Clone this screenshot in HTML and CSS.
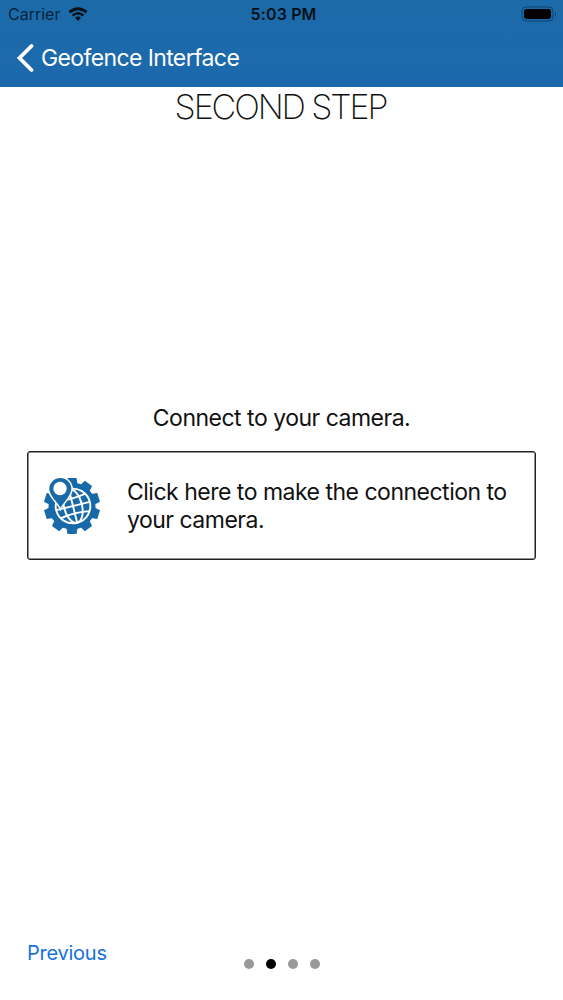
FILE: index.html
```
<!DOCTYPE html>
<html lang="en">
<head>
<meta charset="utf-8">
<title>Geofence Interface</title>
<link rel="stylesheet" href="styles.css">
</head>
<body>
<div class="screen">
  <header class="header">
    <div class="status">
      <div class="carrier"><span class="carrier-name">Carrier</span>
        <svg class="wifi" viewBox="0 0 20 14"><path d="M1.4 5.2Q10-1.8 18.6 5.2" fill="none" stroke="#071018" stroke-width="3"/><path d="M4.6 8.5Q10 4 15.4 8.5" fill="none" stroke="#071018" stroke-width="2.6"/><path d="M7 10.7Q10 8.4 13 10.7L10 14Z" fill="#071018"/></svg>
      </div>
      <div class="time">5:03 PM</div>
      <svg class="battery" viewBox="0 0 36 16"><rect x="1" y="1" width="31" height="14" rx="4" fill="none" stroke="#0d426c"/><rect x="3" y="3" width="27" height="10" rx="2.4" fill="#000"/><path d="M34 5.5q2 2.5 0 5z" fill="#0d426c"/></svg>
    </div>
    <nav class="nav">
      <svg class="back" viewBox="0 0 18 30"><path d="M15.5 3L3.5 15L15.5 27" fill="none" stroke="#fff" stroke-width="3.8" stroke-linecap="round" stroke-linejoin="miter"/></svg>
      <span class="nav-title">Geofence Interface</span>
    </nav>
  </header>
  <main class="main">
    <h1 class="title">SECOND STEP</h1>
    <p class="prompt">Connect to your camera.</p>
    <button class="card">
      <svg class="gear" viewBox="-30 -30 60 60">
        <g fill="#1869a8">
          <circle r="23.5"/>
          <path id="tooth" d="M-5.5-22L-4.5-28H4.5L5.5-22Z"/>
          <use href="#tooth" transform="rotate(36)"/><use href="#tooth" transform="rotate(72)"/><use href="#tooth" transform="rotate(108)"/><use href="#tooth" transform="rotate(144)"/><use href="#tooth" transform="rotate(180)"/><use href="#tooth" transform="rotate(216)"/><use href="#tooth" transform="rotate(252)"/><use href="#tooth" transform="rotate(288)"/><use href="#tooth" transform="rotate(324)"/>
        </g>
        <g fill="none" stroke="#fff" stroke-width="1.9" transform="translate(1 0) rotate(-14)"><circle r="17.3"/><ellipse rx="9" ry="17.3"/><path d="M0-17.3V17.3M-17.3 0H17.3M-15-9Q0-6 15-9M-15 9Q0 6 15 9"/></g>
        <path d="M-11.5 3.5C-14-3-23.5-9-23.5-17A11.8 11.8 0 0 1 .1-17C.1-9-9-3-11.5 3.5Z" fill="#1869a8" stroke="#fff" stroke-width="1.5"/><circle cx="-12" cy="-17.5" r="6.7" fill="#fff"/>
      </svg>
      <span class="card-text"><span class="line">Click here to make the connection to</span><span class="line">your camera.</span></span>
    </button>
  </main>
  <footer class="footer">
    <a class="previous">Previous</a>
    <div class="dots"><i class="dot"></i><i class="dot active"></i><i class="dot"></i><i class="dot"></i></div>
  </footer>
</div>
</body>
</html>
```
FILE: styles.css
```
* { box-sizing: border-box; }
body { margin: 0; background: #fff; color: #111; font-family: Inter, "Liberation Sans", sans-serif; }
.screen { height: 1000px; display: flex; flex-direction: column; overflow: hidden; }
.header { height: 87px; background: linear-gradient(#1c6ba8, #1c68ad); flex: none; }
.status { height: 28px; display: grid; grid-template-columns: 1fr auto 1fr; align-items: center; padding: 0 6px 0 8px; }
.carrier { display: flex; align-items: center; gap: 8px; font-size: 16px; color: #09243a; }
.wifi { width: 20px; height: 14px; margin-top: -1px; }
.time { font-size: 16px; font-weight: 600; letter-spacing: .15px; margin-left: 2px; color: #071018; }
.battery { width: 36px; height: 16px; justify-self: end; margin-top: -1px; }
.nav { height: 59px; display: flex; align-items: center; padding-left: 16px; gap: 7px; color: #fff; }
.back { width: 18px; height: 30px; }
.nav-title { font-size: 23px; letter-spacing: -.62px; }
.main { flex: 1; padding: 0 27px; }
.title { margin: 0; padding-right: 2px; height: 40px; line-height: 40px; text-align: center; font-size: 34px; font-weight: 200; letter-spacing: -2.1px; }
.prompt { margin: 276px 0 0; height: 30px; line-height: 30px; text-align: center; font-size: 23px; letter-spacing: -.5px; }
.card { margin-top: 18px; width: 509px; height: 109px; display: flex; align-items: center; gap: 25px; padding: 0 14px; border: 1px solid #222; box-shadow: inset 0 0 0 .5px #222; border-radius: 3px; background: #fff; color: #111; font: inherit; text-align: left; }
.gear { width: 60px; height: 60px; flex: none; }
.card-text { padding-top: 2px; font-size: 23px; line-height: 27.5px; letter-spacing: -.5px; white-space: nowrap; }
.line { display: block; }
.footer { height: 70px; display: grid; grid-template-columns: 1fr auto 1fr; padding: 0 27px; }
.previous { font-size: 20px; line-height: 46px; letter-spacing: -.25px; color: #1672db; }
.dots { display: flex; gap: 12px; padding-top: 29px; }
.dot { width: 10px; height: 10px; border-radius: 50%; background: #999; }
.active { background: #000; }
```
